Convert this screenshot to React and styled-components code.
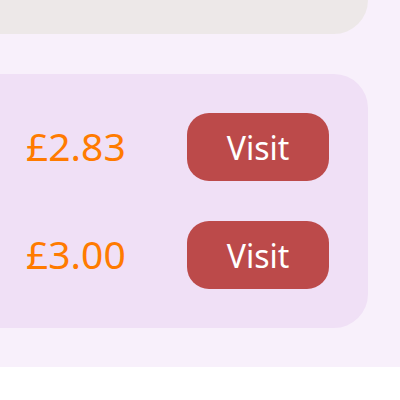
import styled, { createGlobalStyle } from 'styled-components';

const GlobalStyle = createGlobalStyle`
	html, body {
		margin: 0;
		padding: 0;
		background: #ffffff;
	}
	body {
		font-family: 'Noto Sans', 'Open Sans', sans-serif;
	}
`;

const offers = [
	{ id: 1, price: '£2.83' },
	{ id: 2, price: '£3.00' },
];

function App() {
	return (
		<>
			<GlobalStyle />
			<SPage>
				<STopCard />
				<SOfferCard>
					{offers.map((offer) => (
						<SOfferRow key={offer.id}>
							<SPrice>{offer.price}</SPrice>
							<SVisitButton type='button'>Visit</SVisitButton>
						</SOfferRow>
					))}
				</SOfferCard>
			</SPage>
		</>
	);
}

const SPage = styled.div`
	background: #f8f0fb;
	height: 367px;
	overflow: hidden;
	display: flex;
	flex-direction: column;
	gap: 40px;
`;

const STopCard = styled.div`
	flex: none;
	height: 100px;
	margin: -66px 32px 0 -40px;
	border-radius: 34px;
	background: #ede8e8;
`;

const SOfferCard = styled.div`
	flex: none;
	margin: 0 32px 0 -40px;
	padding: 39px 39px 39px 66px;
	border-radius: 34px;
	background: #f0e0f6;
	display: flex;
	flex-direction: column;
	gap: 40px;
`;

const SOfferRow = styled.div`
	display: grid;
	grid-template-columns: 161px 142px;
	align-items: center;
`;

const SPrice = styled.span`
	font-size: 39px;
	font-weight: 400;
	line-height: 1;
	color: #ff7b00;
	margin-top: -3px;
`;

const SVisitButton = styled.button`
	width: 142px;
	height: 68px;
	border: none;
	border-radius: 22px;
	background: #bc4a4a;
	color: #ffffff;
	font-family: 'Noto Sans', 'Open Sans', sans-serif;
	font-size: 32px;
	font-weight: 400;
	padding: 0;
	cursor: pointer;
`;

export default App;
